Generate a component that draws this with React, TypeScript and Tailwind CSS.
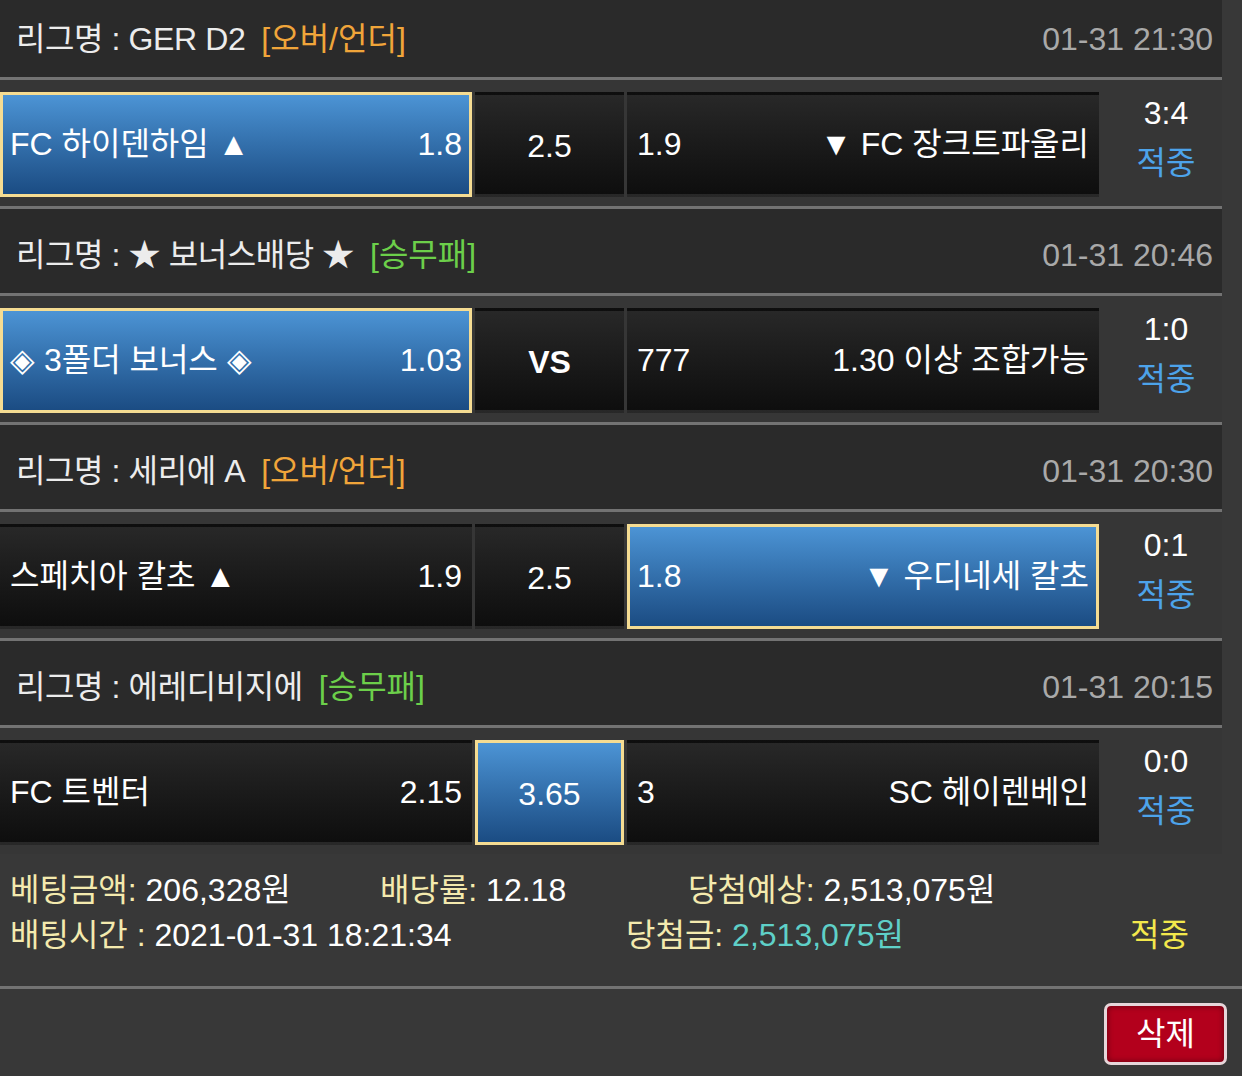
import React from "react";

type Cell = { left?: string; right?: string; center?: string; bold?: boolean; sel?: boolean };
type Game = {
  league: string;
  tag: string;
  tagColor: string;
  date: string;
  home: Cell;
  mid: Cell;
  away: Cell;
  score: string;
};

const games: Game[] = [
  {
    league: "리그명 : GER D2",
    tag: "[오버/언더]",
    tagColor: "text-[#f0a53a]",
    date: "01-31 21:30",
    home: { left: "FC 하이덴하임 ▲", right: "1.8", sel: true },
    mid: { center: "2.5" },
    away: { left: "1.9", right: "▼ FC 장크트파울리" },
    score: "3:4",
  },
  {
    league: "리그명 : ★ 보너스배당 ★",
    tag: "[승무패]",
    tagColor: "text-[#6ccf4a]",
    date: "01-31 20:46",
    home: { left: "◈ 3폴더 보너스 ◈", right: "1.03", sel: true },
    mid: { center: "VS", bold: true },
    away: { left: "777", right: "1.30 이상 조합가능" },
    score: "1:0",
  },
  {
    league: "리그명 : 세리에 A",
    tag: "[오버/언더]",
    tagColor: "text-[#f0a53a]",
    date: "01-31 20:30",
    home: { left: "스페치아 칼초 ▲", right: "1.9" },
    mid: { center: "2.5" },
    away: { left: "1.8", right: "▼ 우디네세 칼초", sel: true },
    score: "0:1",
  },
  {
    league: "리그명 : 에레디비지에",
    tag: "[승무패]",
    tagColor: "text-[#6ccf4a]",
    date: "01-31 20:15",
    home: { left: "FC 트벤터", right: "2.15" },
    mid: { center: "3.65", sel: true },
    away: { left: "3", right: "SC 헤이렌베인" },
    score: "0:0",
  },
];

function OddCell({ c, w }: { c: Cell; w: string }) {
  const base = c.sel
    ? "border-[3px] border-[#f5dc92] bg-gradient-to-b from-[#4c94d5] to-[#1b4c83]"
    : "border-[3px] border-transparent bg-gradient-to-b from-[#282828] to-[#0e0e0e]";
  return (
    <div className={`${w} h-[105px] ${base} flex items-center px-[7px] text-white text-[32px] leading-none`}>
      {c.center !== undefined ? (
        <span className={`w-full text-center pt-[3px] ${c.bold ? "font-bold" : ""}`}>{c.center}</span>
      ) : (
        <div className="w-full flex items-center justify-between -mt-[2px]">
          <span className="whitespace-nowrap">{c.left}</span>
          <span className="whitespace-nowrap">{c.right}</span>
        </div>
      )}
    </div>
  );
}

function GameBlock({ g, last }: { g: Game; last: boolean }) {
  return (
    <div>
      <div className="h-[84px] bg-[#2a2a2a] flex items-center justify-between pl-[16px] pr-[9px] pt-[7px] text-[32px] leading-none">
        <div className="flex items-center gap-[16px]">
          <span className="text-[#ececec] whitespace-nowrap tracking-[-0.4px]">{g.league}</span>
          <span className={`${g.tagColor} whitespace-nowrap`}>{g.tag}</span>
        </div>
        <span className="text-[#a9a9a9] whitespace-nowrap">{g.date}</span>
      </div>
      <div className="h-[3px] bg-[#737373]" />
      <div className="h-[126px] bg-[#363636] pt-[12px] flex items-start gap-[3px]">
        <OddCell c={g.home} w="w-[472px]" />
        <OddCell c={g.mid} w="w-[149px]" />
        <OddCell c={g.away} w="w-[472px]" />
        <div className="flex-1 -mt-[2px] flex flex-col items-center text-[32px] leading-[47px] pl-[8px]">
          <span className="text-white">{g.score}</span>
          <span className="text-[#4da3ea] mt-[3px]">적중</span>
        </div>
      </div>
      {!last && <div className="h-[3px] bg-[#737373]" />}
    </div>
  );
}

export default function App() {
  return (
    <div className="w-[1242px] h-[1076px] overflow-hidden bg-[#383838] font-['Liberation_Sans','Noto_Sans_CJK_KR',sans-serif]">
      <div className="-mt-[7px] w-[1222px]">
        {games.map((g, i) => (
          <GameBlock key={i} g={g} last={i === games.length - 1} />
        ))}
      </div>
      <div className="pt-[14px] pl-[10px] text-[32px] leading-[45px]">
        <div className="flex whitespace-nowrap">
          <span className="w-[370px]">
            <span className="text-[#f4eaae]">베팅금액: </span>
            <span className="text-white">206,328원</span>
          </span>
          <span className="w-[308px]">
            <span className="text-[#f4eaae]">배당률: </span>
            <span className="text-white">12.18</span>
          </span>
          <span>
            <span className="text-[#f4eaae]">당첨예상: </span>
            <span className="text-white">2,513,075원</span>
          </span>
        </div>
        <div className="flex whitespace-nowrap">
          <span className="w-[616px]">
            <span className="text-[#f4eaae]">배팅시간 : </span>
            <span className="text-white">2021-01-31 18:21:34</span>
          </span>
          <span className="w-[504px]">
            <span className="text-[#f4eaae]">당첨금: </span>
            <span className="text-[#5fd0c8]">2,513,075원</span>
          </span>
          <span className="text-[#f3e84c]">적중</span>
        </div>
      </div>
      <div className="mt-[28px] h-[3px] bg-[#737373]" />
      <div className="flex justify-end pr-[15px] pt-[14px]">
        <div className="w-[123px] h-[62px] rounded-[7px] border-[3px] border-[#e6d6da] bg-[#b3001c] shadow-[inset_0_0_6px_rgba(0,0,0,0.45)] flex items-center justify-center text-white text-[32px] leading-none">
          삭제
        </div>
      </div>
    </div>
  );
}
